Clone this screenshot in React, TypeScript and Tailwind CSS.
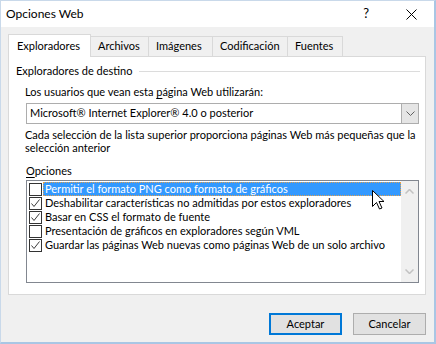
import React from "react";

const font = { fontFamily: "Lato, 'Noto Sans', sans-serif" };

function Check({ checked }: { checked: boolean }) {
  return (
    <div className="w-[13px] h-[13px] border border-[#333333] bg-white flex items-center justify-center shrink-0">
      {checked && (
        <svg width="11" height="11" viewBox="0 0 11 11">
          <polyline points="1.5,5.5 4,8.5 9.5,1.5" fill="none" stroke="#3c3c3c" strokeWidth="1" />
        </svg>
      )}
    </div>
  );
}

const options = [
  { label: "Permitir el formato PNG como formato de gráficos", checked: false, selected: true },
  { label: "Deshabilitar características no admitidas por estos exploradores", checked: true },
  { label: "Basar en CSS el formato de fuente", checked: true },
  { label: "Presentación de gráficos en exploradores según VML", checked: false },
  { label: "Guardar las páginas Web nuevas como páginas Web de un solo archivo", checked: true },
];

export default function App() {
  return (
    <div
      className="w-[436px] h-[344px] bg-[#f0f0f0] border-l border-t border-l-[#c9d9ea] border-t-[#c9d9ea] border-r-2 border-b-2 border-r-[#a9c6e4] border-b-[#a9c6e4] flex flex-col text-[11px] text-black relative overflow-hidden"
      style={font}
    >
      {/* Title bar */}
      <div className="h-[26px] bg-white flex items-center pl-[5px] shrink-0">
        <span className="text-[12px]">Opciones Web</span>
        <div className="flex-1" />
        <span className="text-[13px] mr-[37px]">?</span>
        <svg width="11" height="11" viewBox="0 0 11 11" className="mr-[17px]">
          <path d="M0.5 0.5 L10.5 10.5 M10.5 0.5 L0.5 10.5" stroke="#000" strokeWidth="1" />
        </svg>
      </div>

      {/* Body */}
      <div className="flex flex-col pl-[7px] pr-[8px] pt-[7px]">
        {/* Tabs */}
        <div className="flex items-end h-[22px] relative z-10 whitespace-nowrap">
          <div className="w-[83px] h-[23px] mb-[-1px] bg-white border border-b-0 border-[#d9d9d9] flex items-center pl-[8px]">
            Exploradores
          </div>
          <div className="w-[58px] h-[20px] border-t border-r border-[#d9d9d9] flex items-center pl-[7px]">
            Archivos
          </div>
          <div className="w-[64px] h-[20px] border-t border-r border-[#d9d9d9] flex items-center pl-[7px]">
            Imágenes
          </div>
          <div className="w-[75px] h-[20px] border-t border-r border-[#d9d9d9] flex items-center pl-[7px]">
            Codificación
          </div>
          <div className="w-[55px] h-[20px] border-t border-r border-[#d9d9d9] flex items-center pl-[7px]">
            Fuentes
          </div>
        </div>

        {/* Panel */}
        <div className="h-[239px] bg-white border border-[#d9d9d9] flex flex-col">
          <div className="flex items-center mt-[7px] h-[14px] pl-[7px] pr-[5px]">
            <span>Exploradores de destino</span>
            <div className="flex-1 ml-[7px] border-t border-[#dcdcdc]" />
          </div>
          <div className="mt-[7px] h-[14px] leading-[14px] pl-[16px]">
            Los usuarios que vean esta <span className="underline underline-offset-2">p</span>ágina Web utilizarán:
          </div>
          <div className="mt-[4px] ml-[17px] w-[393px] h-[21px] border border-[#adadad] bg-white flex items-center">
            <span className="flex-1 pl-[3px]">Microsoft® Internet Explorer® 4.0 o posterior</span>
            <div className="w-[17px] h-full bg-[#e5e5e5] border-l border-[#adadad] flex items-center justify-center">
              <svg width="9" height="5" viewBox="0 0 9 5">
                <polyline points="0.5,0.5 4.5,4.5 8.5,0.5" fill="none" stroke="#606060" strokeWidth="1" />
              </svg>
            </div>
          </div>
          <div className="mt-[4px] pl-[16px] pr-[6px] leading-[13px] whitespace-nowrap">
            Cada selección de la lista superior proporciona páginas Web más pequeñas que la
            <br />
            selección anterior
          </div>
          <div className="mt-[10px] h-[14px] leading-[14px] pl-[17px]">
            <span className="underline underline-offset-2">O</span>pciones
          </div>
          <div className="mt-[2px] ml-[17px] w-[393px] h-[103px] border border-[#828790] bg-white flex">
            <div className="flex-1 flex flex-col pt-[1px] whitespace-nowrap">
              {options.map((o) => (
                <div key={o.label} className="h-[14px] flex items-center pl-[2px]">
                  <Check checked={o.checked} />
                  <div
                    className={
                      o.selected
                        ? "flex-1 h-[14px] ml-[1px] pl-[1px] bg-[#3399ff] text-white border border-dotted border-[#e0a050] flex items-center leading-[12px]"
                        : "flex-1 h-[14px] ml-[1px] pl-[2px] flex items-center"
                    }
                  >
                    {o.label}
                  </div>
                </div>
              ))}
            </div>
            <div className="w-[17px] h-full bg-[#f0f0f0] flex flex-col items-center justify-between py-[8px]">
              <svg width="9" height="5" viewBox="0 0 9 5">
                <polyline points="0.5,4.5 4.5,0.5 8.5,4.5" fill="none" stroke="#c2c2c2" strokeWidth="1.5" />
              </svg>
              <svg width="9" height="5" viewBox="0 0 9 5">
                <polyline points="0.5,0.5 4.5,4.5 8.5,0.5" fill="none" stroke="#c2c2c2" strokeWidth="1.5" />
              </svg>
            </div>
          </div>
        </div>

        {/* Buttons */}
        <div className="flex justify-end gap-[11px] mt-[18px]">
          <button className="w-[73px] h-[22px] bg-[#e1e1e1] border-2 border-[#0078d7] flex items-center justify-center text-[11px]">
            Aceptar
          </button>
          <button className="w-[73px] h-[22px] bg-[#e1e1e1] border border-[#adadad] flex items-center justify-center text-[11px]">
            Cancelar
          </button>
        </div>
      </div>

      {/* Mouse cursor */}
      <svg
        width="13"
        height="20"
        viewBox="0 0 13 20"
        className="absolute left-[371px] top-[189px]"
      >
        <path
          d="M0.5 0.5 L0.5 16.5 L4.5 12.5 L7.5 19 L10 18 L7 11.5 L12 11.5 Z"
          fill="#fff"
          stroke="#000"
          strokeWidth="1"
          strokeLinejoin="miter"
        />
      </svg>
    </div>
  );
}
